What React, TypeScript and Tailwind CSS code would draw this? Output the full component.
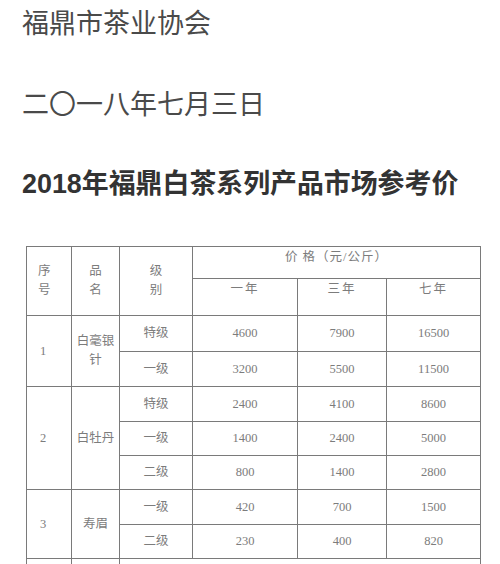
import React from 'react'

const serif = "font-['Liberation_Serif','Noto_Sans_CJK_SC',serif]"

type Row = { grade: string; prices: string[] }
type Group = { no: string; name: React.ReactNode; rows: Row[] }

const groups: Group[] = [
  {
    no: '1',
    name: (
      <>
        白毫银
        <br />
        针
      </>
    ),
    rows: [
      { grade: '特级', prices: ['4600', '7900', '16500'] },
      { grade: '一级', prices: ['3200', '5500', '11500'] },
    ],
  },
  {
    no: '2',
    name: '白牡丹',
    rows: [
      { grade: '特级', prices: ['2400', '4100', '8600'] },
      { grade: '一级', prices: ['1400', '2400', '5000'] },
      { grade: '二级', prices: ['800', '1400', '2800'] },
    ],
  },
  {
    no: '3',
    name: '寿眉',
    rows: [
      { grade: '一级', prices: ['420', '700', '1500'] },
      { grade: '二级', prices: ['230', '400', '820'] },
    ],
  },
]

const rowSpan: Record<number, string> = {
  2: 'row-span-2',
  3: 'row-span-3',
}

function Cell({ className = '', children }: { className?: string; children?: React.ReactNode }) {
  return <div className={`bg-white flex items-center justify-center ${className}`}>{children}</div>
}

export default function App() {
  return (
    <div className="min-h-screen bg-white pl-[22px] pt-[4px] overflow-hidden">
      <p className="text-[27px] leading-[36px] text-[#4a4a4a] font-['Noto_Sans_CJK_SC',sans-serif]">福鼎市茶业协会</p>
      <p className="mt-[45px] text-[27px] leading-[36px] text-[#4a4a4a] font-['Noto_Sans_CJK_SC',sans-serif]">
        二〇一八年七月三日
      </p>
      <h1 className="mt-[45px] text-[26.9px] leading-[36px] font-bold text-[#333] font-['Liberation_Sans','Noto_Sans_CJK_SC',sans-serif]">
        2018年福鼎白茶系列产品市场参考价
      </h1>

      {/* price table */}
      <div
        className={`mt-[44px] ml-[4px] w-[455px] grid grid-cols-[44px_47px_72px_104px_88px_93px] grid-rows-[31px_36px_35px_34px_34px_33px_33px_34px_33px_40px] gap-px p-px bg-[#7a7a7a] text-[12.5px] leading-[19px] text-[#7c7c7c] ${serif}`}
      >
        <Cell className="row-span-2 !justify-start pl-[11px] text-left">
          序<br />号
        </Cell>
        <Cell className="row-span-2">
          品<br />名
        </Cell>
        <Cell className="row-span-2">
          级<br />别
        </Cell>
        <Cell className="col-span-3 !items-start pt-[1px] tracking-[1px]">价&nbsp;格（元/公斤）</Cell>
        <Cell className="!items-start pt-[1px] tracking-[2px]">一年</Cell>
        <Cell className="!items-start pt-[1px] tracking-[2px]">三年</Cell>
        <Cell className="!items-start pt-[1px] tracking-[2px]">七年</Cell>

        {groups.map(g => (
          <React.Fragment key={g.no}>
            <Cell className={`${rowSpan[g.rows.length]} !justify-start pl-[13px]`}>{g.no}</Cell>
            <Cell className={`${rowSpan[g.rows.length]} text-center`}>
              <span>{g.name}</span>
            </Cell>
            {g.rows.map((r, i) => (
              <React.Fragment key={i}>
                <Cell>{r.grade}</Cell>
                {r.prices.map((p, j) => (
                  <Cell key={j}>{p}</Cell>
                ))}
              </React.Fragment>
            ))}
          </React.Fragment>
        ))}

        <Cell />
        <Cell />
        <Cell className="col-span-4" />
      </div>
    </div>
  )
}
